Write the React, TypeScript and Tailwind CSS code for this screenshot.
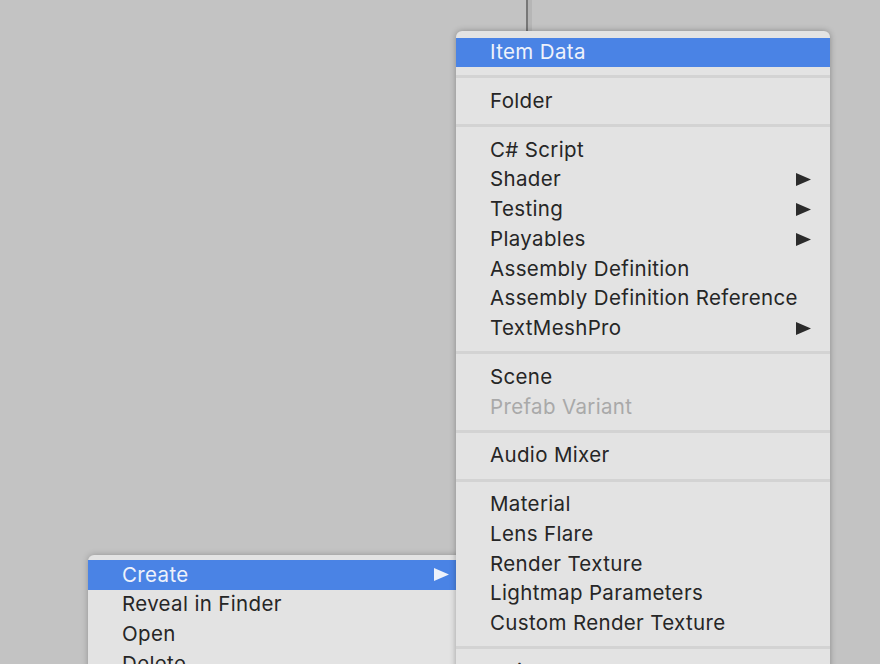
import React from "react";

type Item =
  | { kind: "sep" }
  | { kind: "item"; label: string; sub?: boolean; active?: boolean; disabled?: boolean };

const createMenu: Item[] = [
  { kind: "item", label: "Item Data", active: true },
  { kind: "sep" },
  { kind: "item", label: "Folder" },
  { kind: "sep" },
  { kind: "item", label: "C# Script" },
  { kind: "item", label: "Shader", sub: true },
  { kind: "item", label: "Testing", sub: true },
  { kind: "item", label: "Playables", sub: true },
  { kind: "item", label: "Assembly Definition" },
  { kind: "item", label: "Assembly Definition Reference" },
  { kind: "item", label: "TextMeshPro", sub: true },
  { kind: "sep" },
  { kind: "item", label: "Scene" },
  { kind: "item", label: "Prefab Variant", disabled: true },
  { kind: "sep" },
  { kind: "item", label: "Audio Mixer" },
  { kind: "sep" },
  { kind: "item", label: "Material" },
  { kind: "item", label: "Lens Flare" },
  { kind: "item", label: "Render Texture" },
  { kind: "item", label: "Lightmap Parameters" },
  { kind: "item", label: "Custom Render Texture" },
  { kind: "sep" },
  { kind: "item", label: "Animator Controller" },
  { kind: "item", label: "Animation" },
];

const contextMenu: Item[] = [
  { kind: "item", label: "Create", sub: true, active: true },
  { kind: "item", label: "Reveal in Finder" },
  { kind: "item", label: "Open" },
  { kind: "item", label: "Delete" },
  { kind: "item", label: "Rename" },
];

const Arrow = ({ light }: { light?: boolean }) => (
  <svg width="15" height="13" viewBox="0 0 15 13" className="shrink-0">
    <path d="M0 0 L15 6.5 L0 13 Z" fill={light ? "#eef2fb" : "#2b2b2b"} />
  </svg>
);

const MenuRows = ({ items }: { items: Item[] }) => (
  <>
    {items.map((it, i) =>
      it.kind === "sep" ? (
        <div key={i} className="h-[19px] flex items-center">
          <div className="h-[3px] w-full bg-[#d3d3d3]" />
        </div>
      ) : (
        <div
          key={i}
          className={`h-[29.75px] flex items-center justify-between pl-[34px] pr-[19px] ${
            it.active ? "bg-[#4a83e5] text-[#eef2fb]" : it.disabled ? "text-[#a9a9a9]" : "text-[#262626]"
          }`}
        >
          <span className="whitespace-nowrap">{it.label}</span>
          {it.sub && <Arrow light={it.active} />}
        </div>
      )
    )}
  </>
);

export default function App() {
  return (
    <div
      className="relative w-[880px] h-[664px] overflow-hidden bg-[#c3c3c3] text-[20.5px] tracking-[0.35px] leading-none"
      style={{ fontFamily: "Inter, 'Noto Sans', sans-serif" }}
    >
      {/* splitter line above the menu */}
      <div className="absolute left-[526px] top-0 h-[31px] w-[6px] flex">
        <div className="w-[2px] bg-[#777777]" />
        <div className="w-[4px] bg-[#b6b6b6]" />
      </div>

      {/* project context menu */}
      <div className="absolute left-[88px] top-[555px] w-[380px] h-[140px] pt-[5px] bg-[#e3e3e3] rounded-t-[6px] shadow-[0_0_6px_rgba(0,0,0,0.25)]">
        <MenuRows items={contextMenu} />
      </div>

      {/* create submenu */}
      <div className="absolute left-[456px] top-[31px] w-[374px] h-[700px] pt-[6.5px] bg-[#e3e3e3] rounded-t-[6px] shadow-[0_0_6px_rgba(0,0,0,0.3)]">
        <MenuRows items={createMenu} />
      </div>
    </div>
  );
}
